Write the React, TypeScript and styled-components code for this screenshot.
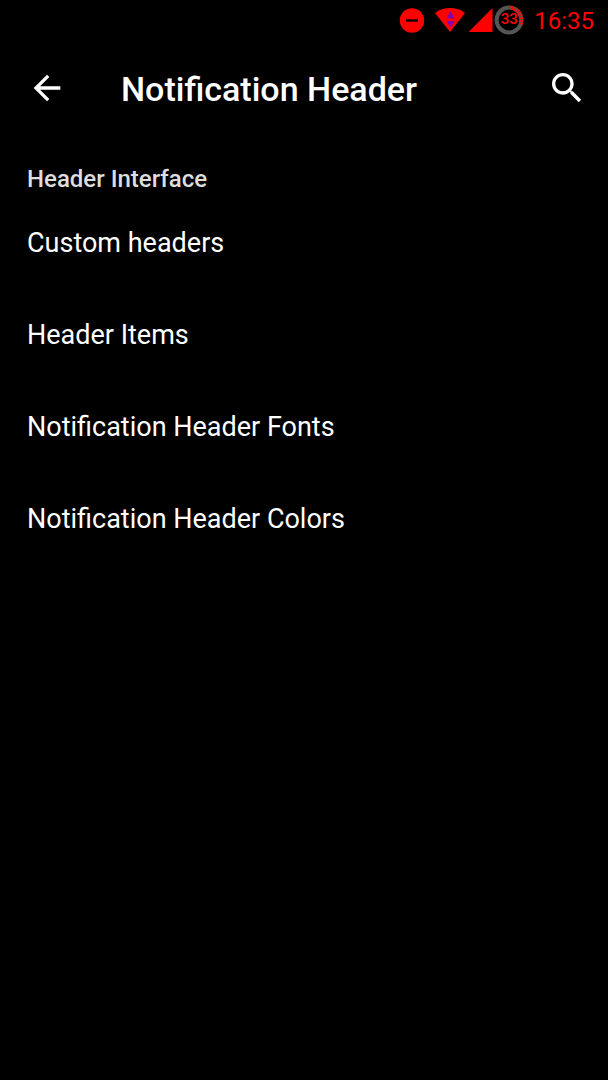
import React from "react";
import styled, { createGlobalStyle } from "styled-components";

const GlobalStyle = createGlobalStyle`
  * { box-sizing: border-box; }
  body {
    margin: 0;
    background: #000;
    color: #fff;
    font-family: Roboto, sans-serif;
  }
`;

const Screen = styled.div`
  display: flex;
  flex-direction: column;
  min-height: 100vh;
  background: #000;
`;

const StatusBar = styled.div`
  display: flex;
  align-items: center;
  justify-content: flex-end;
  height: 40px;
  padding-right: 14px;
  color: #f00;
`;

const StatusIcon = styled.svg<{ $gap: number }>`
  display: block;
  flex: none;
  margin-right: ${(p) => p.$gap}px;
`;

const Battery = styled.div`
  display: grid;
  place-items: center;
  width: 30px;
  height: 30px;
  margin-right: 10px;

  > * {
    grid-area: 1 / 1;
  }
`;

const BatteryLevel = styled.span`
  padding-bottom: 2px;
  font-size: 15px;
  font-weight: 500;
  line-height: 18px;
`;

const Clock = styled.time`
  font-size: 24px;
  line-height: 40px;
  padding-top: 2px;
`;

const Toolbar = styled.header`
  display: flex;
  align-items: center;
  height: 95px;
  padding: 0 21px 0 27px;
`;

const IconButton = styled.button`
  flex: none;
  width: 40px;
  height: 40px;
  padding: 0;
  border: 0;
  background: none;
  color: #fff;
  cursor: pointer;

  svg {
    display: block;
    fill: currentColor;
  }
`;

const Title = styled.h1`
  flex: 1;
  margin: 0 0 0 54px;
  padding-top: 2px;
  font-size: 34px;
  font-weight: 500;
  line-height: 40px;
`;

const Section = styled.section`
  padding-top: 28px;
`;

const SectionTitle = styled.h2`
  margin: 0;
  padding: 0 27px;
  color: #dedede;
  font-size: 24px;
  font-weight: 500;
  line-height: 32px;
`;

const List = styled.ul`
  margin: 0;
  padding: 2px 0 0;
  list-style: none;
`;

const Row = styled.a`
  display: block;
  padding: 30px 27px;
  color: #fff;
  font-size: 27px;
  line-height: 32px;
  text-decoration: none;
`;

const items = [
  "Custom headers",
  "Header Items",
  "Notification Header Fonts",
  "Notification Header Colors",
];

export default function App() {
  return (
    <Screen>
      <GlobalStyle />
      <StatusBar>
        <StatusIcon $gap={10} width="26" height="26" viewBox="0 0 26 26" aria-label="Do not disturb">
          <circle cx="13" cy="13.5" r="12.2" fill="#f00" />
          <rect x="7" y="12.3" width="12" height="2.4" fill="#000" />
        </StatusIcon>
        <StatusIcon $gap={4} width="30" height="24" viewBox="0 0 30 24" aria-label="Wi-Fi">
          <path d="M0 5C8-1.6 22-1.6 30 5L15 24z" fill="#f00" />
          <path d="M15.5 3l4 7.5h-8zM11.5 13h8l-4 6.5z" fill="#8200b4" />
        </StatusIcon>
        <StatusIcon $gap={1} width="24" height="24" viewBox="0 0 24 24" aria-label="Signal">
          <path d="M23.5 0v24H-.5z" fill="#f00" />
        </StatusIcon>
        <Battery>
          <svg width="30" height="30" viewBox="0 0 30 30" aria-hidden="true">
            <circle cx="15" cy="15" r="12.4" fill="none" stroke="#555" strokeWidth="4" />
            <circle
              cx="15"
              cy="15"
              r="12.4"
              fill="none"
              stroke="#f00"
              strokeWidth="4"
              pathLength="100"
              strokeDasharray="2 1.6 2 1.6 2 1.6 2 1.6 2 1.6 2 1.6 2 1.6 2 1.6 2 69.2"
              transform="rotate(-90 15 15)"
            />
          </svg>
          <BatteryLevel>33</BatteryLevel>
        </Battery>
        <Clock>16:35</Clock>
      </StatusBar>
      <Toolbar>
        <IconButton aria-label="Back">
          <svg width="40" height="40" viewBox="0 0 24 24">
            <path d="M20 11H7.83l5.59-5.59L12 4l-8 8 8 8 1.41-1.41L7.83 13H20v-2z" />
          </svg>
        </IconButton>
        <Title>Notification Header</Title>
        <IconButton aria-label="Search">
          <svg width="40" height="40" viewBox="0 0 24 24">
            <path d="M15.5 14h-.79l-.28-.27C15.41 12.59 16 11.11 16 9.5 16 5.91 13.09 3 9.5 3S3 5.91 3 9.5 5.91 16 9.5 16c1.61 0 3.09-.59 4.23-1.57l.27.28v.79l5 4.99L20.49 19l-4.99-5zm-6 0C7.01 14 5 11.99 5 9.5S7.01 5 9.5 5 14 7.01 14 9.5 11.99 14 9.5 14z" />
          </svg>
        </IconButton>
      </Toolbar>
      <Section>
        <SectionTitle>Header Interface</SectionTitle>
        <List>
          {items.map((item) => (
            <li key={item}>
              <Row href="#">{item}</Row>
            </li>
          ))}
        </List>
      </Section>
    </Screen>
  );
}
